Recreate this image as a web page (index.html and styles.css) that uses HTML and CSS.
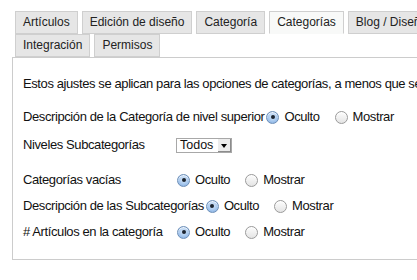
FILE: index.html
```html
<!DOCTYPE html>
<html lang="es">
<head>
    <meta charset="UTF-8">
    <title>Categorías</title>
    <link rel="stylesheet" href="styles.css">
</head>
<body>
    <div class="page">
        <ul class="tabs">
            <li class="tab">Artículos</li>
            <li class="tab">Edición de diseño</li>
            <li class="tab">Categoría</li>
            <li class="tab active">Categorías</li>
            <li class="tab">Blog / Diseño</li>
            <li class="tab">Integración</li>
            <li class="tab">Permisos</li>
        </ul>

        <div class="panel">
            <p class="intro">Estos ajustes se aplican para las opciones de categorías, a menos que se cambien para una categoría en particular.</p>

            <div class="row first">
                <span class="label">Descripción de la Categoría de nivel superior</span>
                <span class="radio checked"></span><span class="opt">Oculto</span>
                <span class="radio"></span><span class="opt">Mostrar</span>
            </div>

            <div class="row levels">
                <span class="label">Niveles Subcategorías</span>
                <span class="select">
                    <span class="select-value">Todos</span>
                    <span class="select-arrow"></span>
                </span>
            </div>

            <div class="row group">
                <span class="label">Categorías vacías</span>
                <span class="radio checked"></span><span class="opt">Oculto</span>
                <span class="radio"></span><span class="opt">Mostrar</span>
            </div>

            <div class="row">
                <span class="label">Descripción de las Subcategorías</span>
                <span class="radio checked"></span><span class="opt">Oculto</span>
                <span class="radio"></span><span class="opt">Mostrar</span>
            </div>

            <div class="row">
                <span class="label"># Artículos en la categoría</span>
                <span class="radio checked"></span><span class="opt">Oculto</span>
                <span class="radio"></span><span class="opt">Mostrar</span>
            </div>
        </div>
    </div>
</body>
</html>
```

FILE: styles.css
```css
* {
    margin: 0;
    padding: 0;
    box-sizing: border-box;
}

body {
    font-family: 'Liberation Sans', Arial, sans-serif;
    background: #fff;
    color: #111;
    overflow: hidden;
}

.page {
    width: 480px;
    padding: 11px 0 0 12px;
}

.tabs {
    list-style: none;
    display: flex;
    flex-wrap: wrap;
    column-gap: 4px;
    width: 450px;
    margin-left: 3px;
}

.tab {
    height: 23px;
    padding: 0 7px;
    font-size: 12px;
    line-height: 21px;
    color: #222;
    background: #e6e6e6;
    border: 1px solid #cfcfcf;
}

.tab.active {
    background: #f8f9f8;
    border-bottom-color: #f8f9f8;
}

.panel {
    border: 1px solid #cccccc;
    padding: 18px 0 19px 10px;
    font-size: 13px;
    line-height: 16px;
    letter-spacing: -0.4px;
}

.intro {
    white-space: nowrap;
    margin-bottom: 17px;
}

.row {
    display: flex;
    align-items: center;
    height: 16px;
    margin-top: 10px;
    white-space: nowrap;
}

.row.first {
    margin-top: 0;
}

.row.levels {
    margin-top: 12px;
}

.row.group {
    margin-top: 19px;
}

.label {
    min-width: 152px;
    margin-right: 2px;
}

.opt {
    margin: 0 15px 0 5px;
}

.radio {
    width: 13px;
    height: 13px;
    border-radius: 50%;
    border: 1px solid #9a9a9a;
    background: linear-gradient(#fdfdfd, #e4e4e4);
    box-shadow: inset 0 1px 1px rgba(255, 255, 255, 0.9);
    position: relative;
}

.radio.checked {
    border-color: #6d8fb8;
    background: radial-gradient(circle at 50% 40%, #d9e8f8 0%, #a7c8ee 55%, #7aa6dc 100%);
}

.radio.checked::after {
    content: '';
    position: absolute;
    top: 3.5px;
    left: 3.5px;
    width: 4px;
    height: 4px;
    border-radius: 50%;
    background: #1b2430;
}

.select {
    display: flex;
    align-items: stretch;
    height: 15px;
    margin-left: -1px;
    border: 1px solid #a8a8a8;
    background: #fff;
}

.select-value {
    width: 40px;
    padding-left: 3px;
    font-size: 12.5px;
    line-height: 13px;
    letter-spacing: 0;
}

.select-arrow {
    width: 14px;
    background: #ececec;
    border-left: 1px solid #fff;
    box-shadow: inset -1px -1px 0 #8c8c8c;
    position: relative;
}

.select-arrow::after {
    content: '';
    position: absolute;
    top: 5px;
    left: 3px;
    border-left: 3.5px solid transparent;
    border-right: 3.5px solid transparent;
    border-top: 4px solid #000;
}
```
